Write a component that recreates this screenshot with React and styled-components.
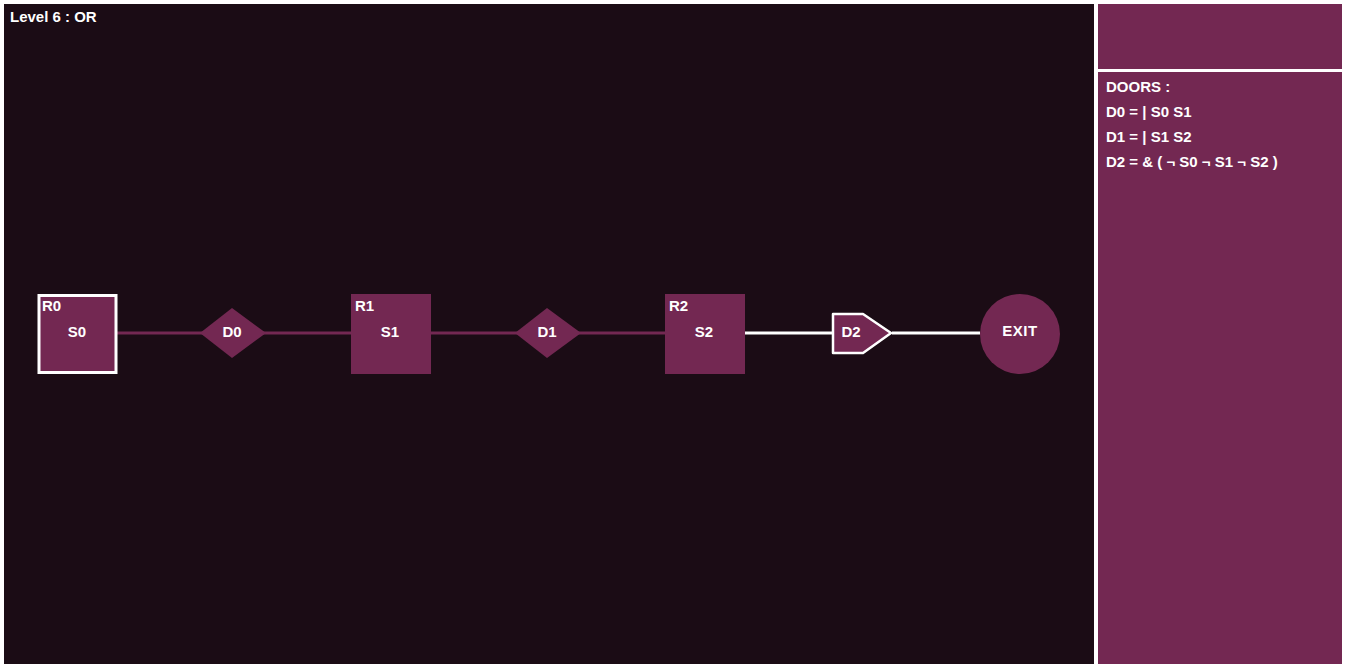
import React from "react";
import styled, { createGlobalStyle } from "styled-components";

const DARK = "#1b0c15";
const PURPLE = "#732852";

const GlobalStyle = createGlobalStyle`
  html, body {
    margin: 0;
    padding: 0;
    background: #fff;
  }
  body {
    font-family: "Liberation Sans", Arial, sans-serif;
  }
`;

const rooms = [
  { id: "R0", s: "S0", x: 38, current: true },
  { id: "R1", s: "S1", x: 351 },
  { id: "R2", s: "S2", x: 665 },
];

const doors = ["D0 = | S0 S1", "D1 = | S1 S2", "D2 = & ( ¬ S0 ¬ S1 ¬ S2 )"];

const App = () => {
  return (
    <>
      <GlobalStyle />
      <Screen>
        <Board>
          <LevelTitle>Level 6 : OR</LevelTitle>
          <Graph viewBox="4 4 1090 660">
            {/* links */}
            <line x1="116" y1="333" x2="351" y2="333" stroke={PURPLE} strokeWidth="3" />
            <line x1="431" y1="333" x2="665" y2="333" stroke={PURPLE} strokeWidth="3" />
            <line x1="745" y1="333" x2="833" y2="333" stroke="#fff" strokeWidth="3" />
            <line x1="892" y1="333" x2="980" y2="333" stroke="#fff" strokeWidth="3" />

            {/* rooms */}
            {rooms.map((r) => (
              <g key={r.id}>
                {r.current ? (
                  <rect x={r.x + 1} y="295.5" width="77" height="77" fill={PURPLE} stroke="#fff" strokeWidth="3" />
                ) : (
                  <rect x={r.x} y="294" width="80" height="80" fill={PURPLE} />
                )}
                <NodeText x={r.x + 4} y="305" textAnchor="start">{r.id}</NodeText>
                <NodeText x={r.x + 39} y="331" textAnchor="middle">{r.s}</NodeText>
              </g>
            ))}

            {/* or doors */}
            <polygon points="200,333 232,308 266,333 232,358" fill={PURPLE} />
            <NodeText x="232" y="331" textAnchor="middle">D0</NodeText>
            <polygon points="515,333 547,308 581,333 547,358" fill={PURPLE} />
            <NodeText x="547" y="331" textAnchor="middle">D1</NodeText>

            {/* and door, open */}
            <polygon
              points="833,314 863,314 891,333 863,353 833,353"
              fill={PURPLE}
              stroke="#fff"
              strokeWidth="2.5"
              strokeLinejoin="round"
            />
            <NodeText x="851" y="331" textAnchor="middle">D2</NodeText>

            {/* exit */}
            <circle cx="1020" cy="334" r="40" fill={PURPLE} />
            <NodeText x="1020" y="330" textAnchor="middle" letterSpacing="0.6">EXIT</NodeText>
          </Graph>
        </Board>
        <Side>
          <TopPanel />
          <DoorPanel>
            <DoorLine>DOORS :</DoorLine>
            {doors.map((d) => (
              <DoorLine key={d}>{d}</DoorLine>
            ))}
          </DoorPanel>
        </Side>
      </Screen>
    </>
  );
};

export default App;

const Screen = styled.div`
  display: flex;
  gap: 4px;
  height: 100vh;
  padding: 4px;
  box-sizing: border-box;
`;

const Board = styled.div`
  position: relative;
  width: 1090px;
  flex-shrink: 0;
  background: ${DARK};
`;

const LevelTitle = styled.div`
  position: absolute;
  top: 4px;
  left: 6px;
  color: #fff;
  font-size: 15px;
  font-weight: 700;
  z-index: 1;
`;

const Graph = styled.svg`
  display: block;
  width: 100%;
  height: 100%;
`;

const NodeText = styled.text`
  fill: #fff;
  font-family: "Liberation Sans", Arial, sans-serif;
  font-size: 15px;
  font-weight: 700;
  dominant-baseline: central;
`;

const Side = styled.div`
  flex: 1;
  display: flex;
  flex-direction: column;
  gap: 3px;
`;

const TopPanel = styled.div`
  height: 65px;
  background: ${PURPLE};
`;

const DoorPanel = styled.div`
  flex: 1;
  background: ${PURPLE};
  padding: 2px 8px;
`;

const DoorLine = styled.div`
  color: #fff;
  font-size: 15px;
  font-weight: 700;
  line-height: 25px;
`;
